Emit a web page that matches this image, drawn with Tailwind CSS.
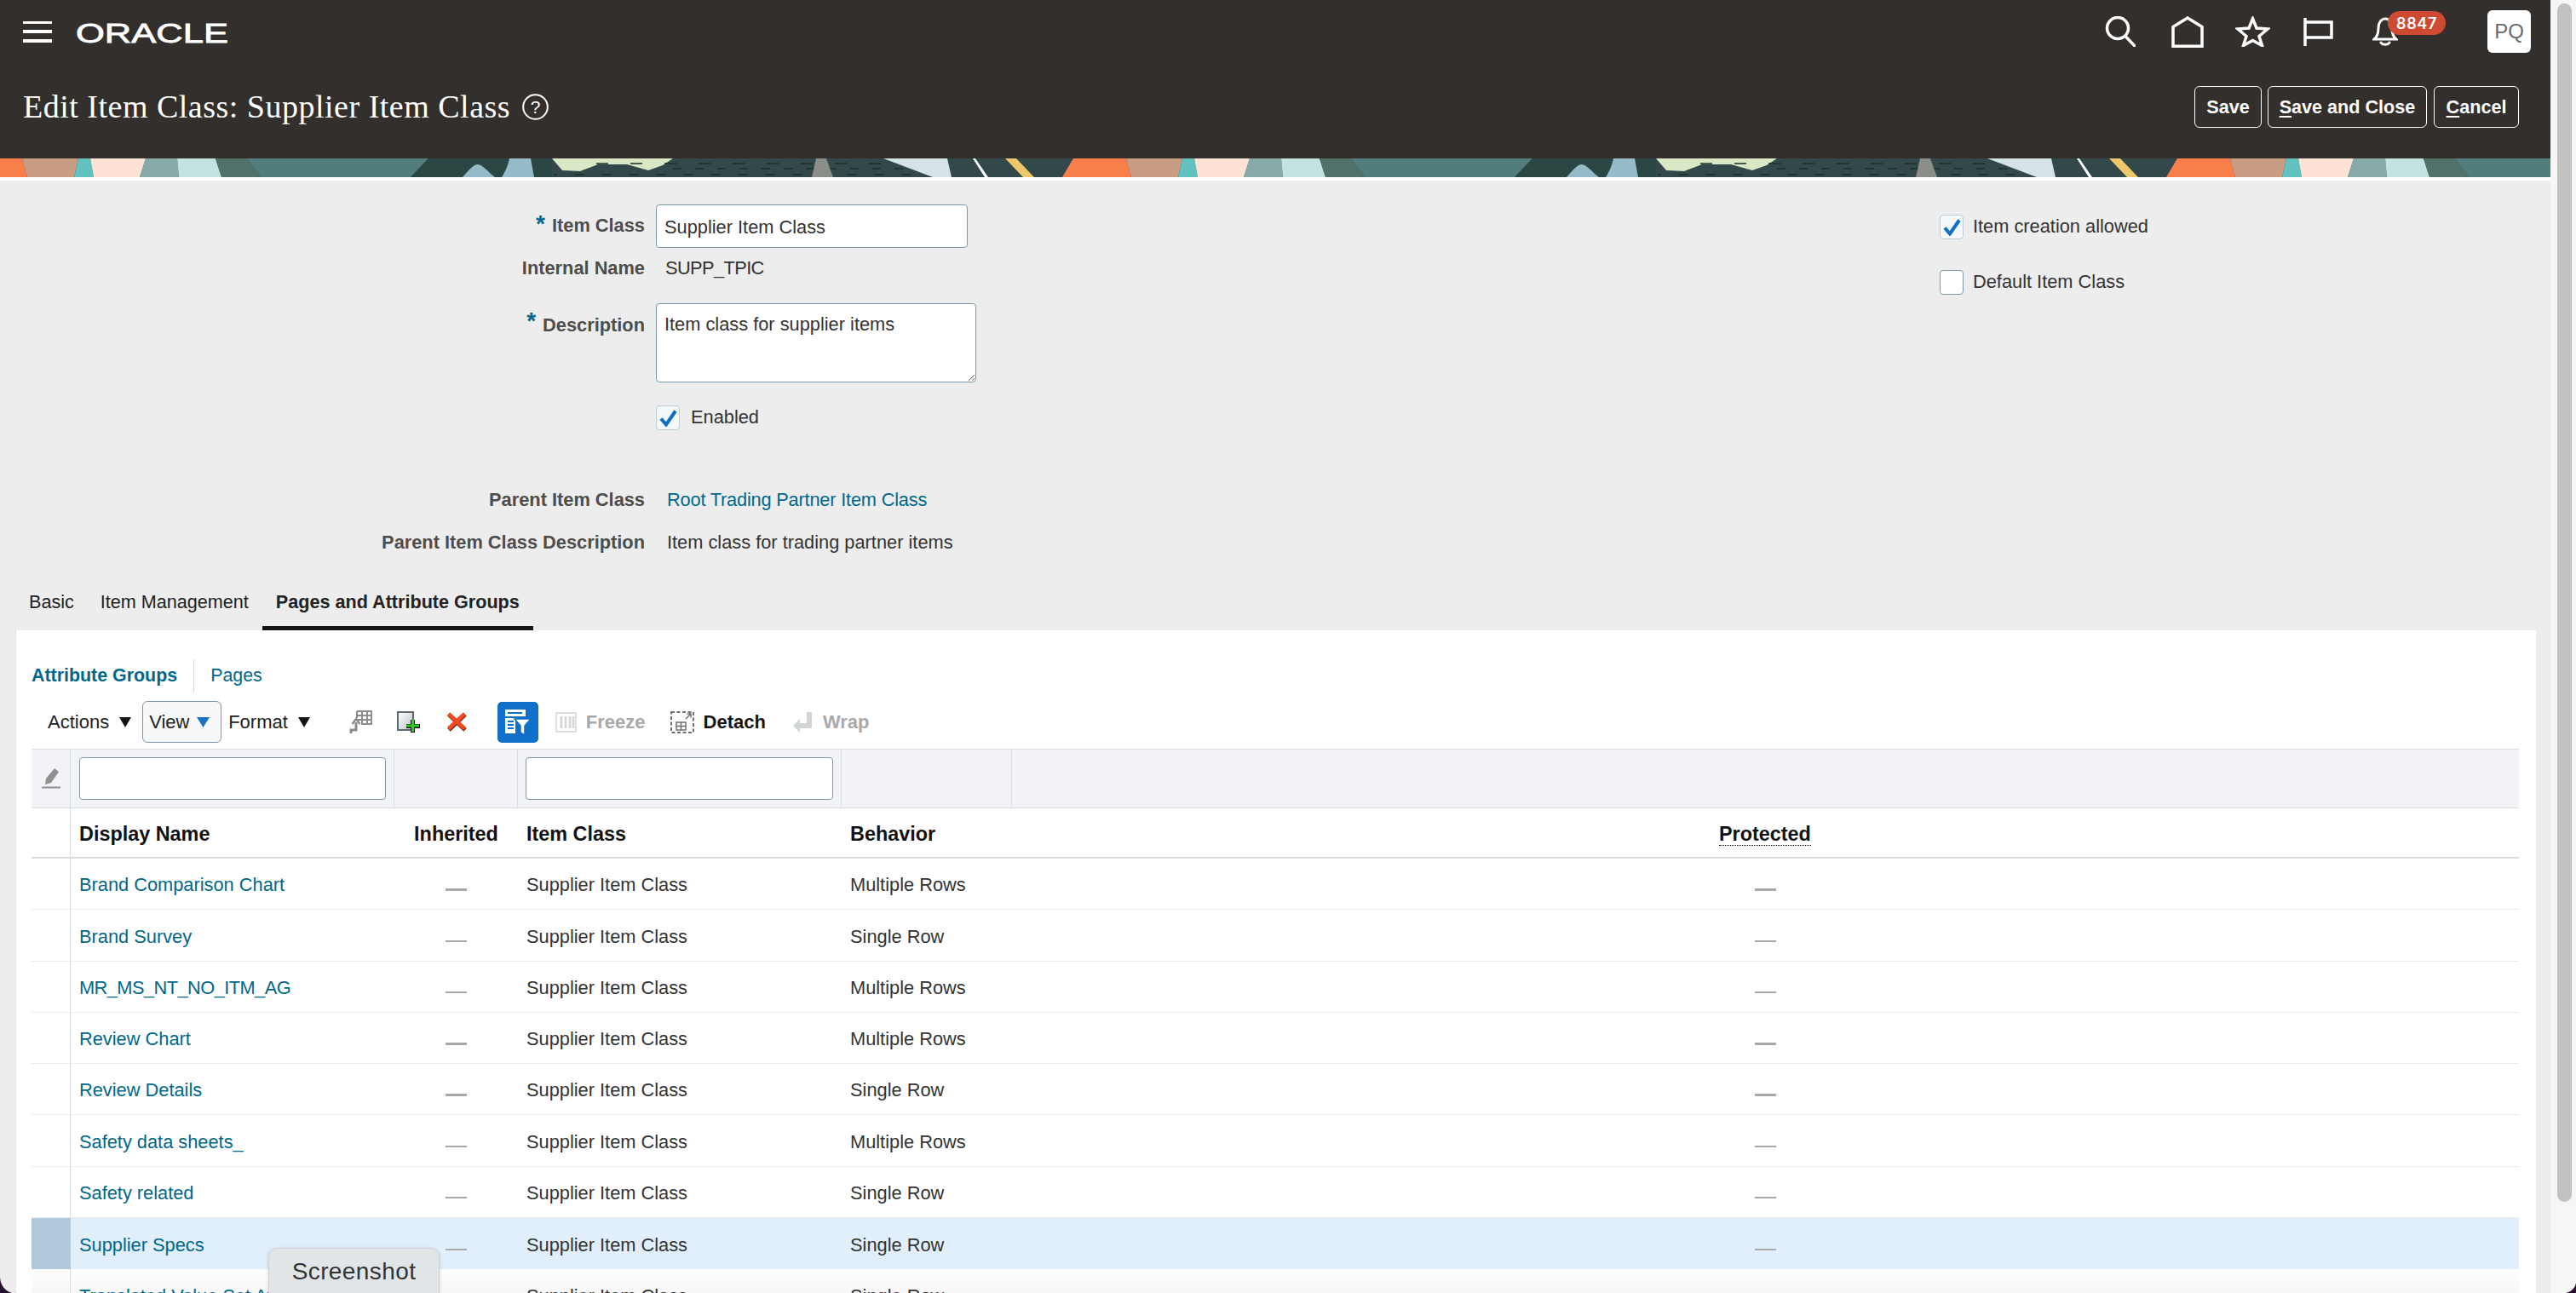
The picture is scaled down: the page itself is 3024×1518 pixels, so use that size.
<!DOCTYPE html>
<html>
<head>
<meta charset="utf-8">
<title>Edit Item Class</title>
<script src="https://cdn.jsdelivr.net/npm/@tailwindcss/browser@4"></script>
</head>
<body class="m-0 overflow-hidden">
<div class="relative flex w-[3024px] h-[1518px] overflow-hidden bg-[#ededed] font-['Liberation_Sans',Arial,sans-serif] text-[21.8px] text-[#333]">
  <main class="w-[2994px] shrink-0 flex flex-col">
    <header class="h-[186px] shrink-0 bg-[#332f2c] text-white">
      <div class="flex items-center h-[74px]">
        <div class="ml-[27px] w-[34px] h-[25px] flex flex-col justify-between">
          <div class="h-[3.5px] bg-white"></div><div class="h-[3.5px] bg-white"></div><div class="h-[3.5px] bg-white"></div>
        </div>
        <svg class="ml-[28px] mt-[4px]" width="179" height="36" viewBox="0 0 179 36"><text x="0" y="29" font-size="30.5" fill="#fff" stroke="#fff" stroke-width="0.8" textLength="179" lengthAdjust="spacingAndGlyphs" font-family="Liberation Sans">ORACLE</text></svg>
        <div class="flex-1"></div>
        <svg width="36" height="36" viewBox="0 0 36 36" fill="none" stroke="#fff" stroke-width="3.5"><circle cx="15" cy="14" r="12.5"/><path d="M24 23.5L35 35" stroke-linecap="round"/></svg>
        <svg class="ml-[42px]" width="38" height="37" viewBox="0 0 38 37" fill="none" stroke="#fff" stroke-width="3.5"><path d="M2 35.2V12.5L19 2l17 10.5v22.7z"/></svg>
        <svg class="ml-[37px]" width="41" height="36" viewBox="0 0 41 36" fill="none" stroke="#fff" stroke-width="3.5"><path d="M20.5 3L25 14l13 1-10 8.5 3.5 11-11-6-11 6 3.500-11L3 15l13-1z"/></svg>
        <svg class="ml-[39px]" width="35" height="33" viewBox="0 0 35 33" fill="none" stroke="#fff" stroke-width="3.500"><path d="M2 0v33M2 5h31v18H2"/></svg>
        <div class="relative ml-[46px] w-[30px] h-[34px]">
          <svg width="30" height="34" viewBox="0 0 30 34" fill="none" stroke="#fff" stroke-width="3"><path d="M2 26c4-3 5-7 5-13C7 6 11 2 15 2s8 4 8 11c0 6 1 10 5 13z"/><path d="M10 30c2 3 8 3 10 0" stroke-linecap="round"/></svg>
          <div class="absolute left-[18px] top-[-7px] w-[68px] h-[28px] rounded-full bg-[#ce4a33] flex items-center justify-center font-['Inter',sans-serif] font-semibold text-[18px] tracking-[0.6px] text-white">8847</div>
        </div>
        <div class="ml-[105px] mr-[23px] w-[51px] h-[50px] rounded-[6px] bg-white flex items-center justify-center text-[#6b6b6b] text-[24px]">PQ</div>
      </div>
      <div class="flex items-center h-[102px] pl-[27px] pr-[37px]">
        <h1 class="text-[38px] leading-[44px] tracking-[0.5px] font-normal text-white font-['Liberation_Serif',serif]">Edit Item Class: Supplier Item Class</h1>
        <svg class="ml-[14px]" width="31" height="31" viewBox="0 0 31 31" fill="none" stroke="#fff" stroke-width="2"><circle cx="15.500" cy="15.500" r="14.300"/><text x="15.500" y="23" text-anchor="middle" font-size="21" fill="#fff" stroke="none" font-family="Liberation Sans">?</text></svg>
        <div class="flex-1"></div>
        <button class="w-[79px] h-[49px] pt-[2px] rounded-[6px] border-[1.5px] border-white font-bold text-[21.6px] text-white">Save</button>
        <button class="ml-[7px] w-[187px] h-[49px] pt-[2px] rounded-[6px] border-[1.5px] border-white font-bold text-[21.6px] text-white"><span class="underline underline-offset-[3px]">S</span>ave and Close</button>
        <button class="ml-[8px] w-[100px] h-[49px] pt-[2px] rounded-[6px] border-[1.5px] border-white font-bold text-[21.6px] text-white"><span class="underline underline-offset-[3px]">C</span>ancel</button>
      </div>
    </header>

    <svg class="shrink-0 block" width="2994" height="22" viewBox="0 0 2994 22">
      <defs>
        <g id="tile">
          <rect width="1296" height="22" fill="#33484a"/>
          <path d="M0 0H26L32 22H0z" fill="#f97f4a"/>
          <path d="M26 0H92L87 22H32z" fill="#c99d84"/>
          <path d="M92 0H106L110 22H87z" fill="#61c2bf"/>
          <path d="M106 0H171L164 22H110z" fill="#fee2d6"/>
          <path d="M171 0H208L210 22H164z" fill="#86aaa8"/>
          <path d="M208 0H253L260 22H210z" fill="#c5e2e3"/>
          <path d="M253 0H290L307 22H260z" fill="#4f7169"/>
          <path d="M290 0H503L482 22H307z" fill="#527d7d"/>
          <path d="M503 0H648V22H482z" fill="#2b4743"/>
          <path d="M543 22C552 12 556 7 561 7C566 7 573 16 581 22z" fill="#96bbc8"/>
          <path d="M589 22C594 14 597 6 598 0H623L627 22z" fill="#96bbc8"/>
          <path d="M648 0L660 14L681 15L702 7L736 7L761 14L778 8L790 0z" fill="#dbe8c6"/>
          <g stroke="#1f2e2e" stroke-width="1.500" fill="none">
            <path d="M700 6H1040" stroke-dasharray="14 26"/>
            <path d="M650 19H1090" stroke-dasharray="12 20" stroke-dashoffset="8"/>
            <path d="M790 12H1090" stroke-dasharray="10 16"/>
          </g>
          <path d="M953 22L958 0H970L978 22z" fill="#8a8f8a"/>
          <path d="M1037 0H1112L1117 22H1095z" fill="#d5e2e6"/>
          <path d="M1123 0H1260L1247 22H1128z" fill="#33484a"/>
          <path d="M1142 0H1145L1160 22H1156z" fill="#fff"/>
          <path d="M1180 0H1193L1214 22H1201z" fill="#eec76c"/>
          <path d="M1260 0H1296V22H1247z" fill="#f97f4a"/>
        </g>
      </defs>
      <use href="#tile" x="0"/><use href="#tile" x="1296"/><use href="#tile" x="2592"/>
    </svg>
    <div class="h-[4px] shrink-0 bg-white"></div>

    <section class="flex shrink-0">
      <div class="w-[2277px] pt-[28px] grid grid-cols-[757px_1fr] gap-x-[13px]">
        <label class="h-[51px] flex items-center justify-end font-bold text-[#4d4d4d]"><span class="text-[#00688c] text-[28px] leading-[20px] mr-[8px] -translate-y-[3px]">*</span>Item Class</label>
        <input class="w-[366px] h-[51px] pt-[2px] rounded-[4px] border-[1.5px] border-[#7a99a6] bg-white px-[9px] text-[21.8px] text-[#333]" value="Supplier Item Class">

        <label class="h-[50px] pb-[2px] flex items-center justify-end font-bold text-[#4d4d4d]">Internal Name</label>
        <div class="h-[50px] pb-[2px] flex items-center pl-[11px] tracking-[-0.6px]">SUPP_TPIC</div>

        <label class="mt-[15px] pt-[12px] h-[93px] flex justify-end font-bold text-[#4d4d4d] leading-[28px]"><span class="text-[#00688c] text-[28px] leading-[20px] mr-[8px] -mt-[1px]">*</span>Description</label>
        <textarea class="mt-[15px] w-[376px] h-[93px] rounded-[4px] border-[1.5px] border-[#7a99a6] bg-white px-[9px] pt-[10px] text-[21.8px] leading-[28px] text-[#333]">Item class for supplier items</textarea>

        <div class="mt-[27px] h-[29px]"></div>
        <div class="mt-[27px] h-[29px] flex items-center">
          <div class="w-[28px] h-[29px] rounded-[4px] border border-[#b9ccd8] bg-[#f5f8fb] flex items-center justify-center"><svg width="21" height="20" viewBox="0 0 21 20" fill="none" stroke="#0f6fc6" stroke-width="4"><path d="M2 10.500l6 7L19 1.500"/></svg></div>
          <span class="ml-[13px]">Enabled</span>
        </div>

        <label class="mt-[57px] h-[50px] flex items-center justify-end font-bold text-[#4d4d4d]">Parent Item Class</label>
        <a class="mt-[57px] h-[50px] flex items-center pl-[13px] tracking-[-0.2px] text-[#00688c]">Root Trading Partner Item Class</a>

        <label class="h-[50px] flex items-center justify-end font-bold text-[#4d4d4d]">Parent Item Class Description</label>
        <div class="h-[50px] flex items-center pl-[13px]">Item class for trading partner items</div>
      </div>
      <div class="pt-[40px] flex flex-col gap-[36px]">
        <div class="h-[29px] flex items-center">
          <div class="w-[28px] h-[29px] rounded-[4px] border border-[#b9ccd8] bg-[#f5f8fb] flex items-center justify-center"><svg width="21" height="20" viewBox="0 0 21 20" fill="none" stroke="#0f6fc6" stroke-width="4"><path d="M2 10.500l6 7L19 1.500"/></svg></div>
          <span class="ml-[11px]">Item creation allowed</span>
        </div>
        <div class="h-[29px] flex items-center">
          <div class="w-[28px] h-[29px] rounded-[4px] border border-[#7f98a8] bg-white"></div>
          <span class="ml-[11px]">Default Item Class</span>
        </div>
      </div>
    </section>

    <nav class="mt-[18px] ml-[18px] h-[60px] shrink-0 flex text-[21.6px] text-[#222]">
      <div class="h-full flex items-center pl-[16px] pr-[15px] border-b-[5px] border-transparent">Basic</div>
      <div class="h-full flex items-center px-[16px] border-b-[5px] border-transparent">Item Management</div>
      <div class="h-full flex items-center px-[16px] font-bold border-b-[5px] border-[#161513]">Pages and Attribute Groups</div>
    </nav>

    <section class="ml-[18px] w-[2959px] flex-1 min-h-0 overflow-hidden bg-white pl-[18px] pr-[20px] pt-[34px] border-l border-dotted border-[#cfd5d8]">
      <div class="h-[39px] flex items-center text-[21.4px] text-[#00688c]">
        <div class="h-full flex items-center pr-[19px] font-bold border-r border-[#d8dde0]">Attribute Groups</div>
        <div class="pl-[19px]">Pages</div>
      </div>

      <div class="mt-[10px] h-[49px] flex items-center text-[22px] text-[#222]">
        <span class="ml-[19px]">Actions</span>
        <svg class="ml-[12px]" width="14" height="12" viewBox="0 0 14 12"><path d="M0 0h14L7 12z" fill="#161513"/></svg>
        <div class="ml-[13px] w-[93px] h-[49px] rounded-[6px] border-[1.5px] border-[#7a99a6] bg-[#f7f8fa] flex items-center pl-[7px]">
          <span>View</span>
          <svg class="ml-[9px]" width="15" height="12" viewBox="0 0 15 12"><path d="M0 0h15L7.500 12z" fill="#1a73c8"/></svg>
        </div>
        <span class="ml-[8px]">Format</span>
        <svg class="ml-[12px]" width="14" height="12" viewBox="0 0 14 12"><path d="M0 0h14L7 12z" fill="#161513"/></svg>
        <svg class="ml-[46px]" width="27" height="28" viewBox="0 0 27 28" fill="none" stroke="#8c8c8c"><path d="M9 1h17v15H14M9 1v8M9 6h17M9 11h17M15 1v15M21 1v15" stroke-width="2"/><path d="M2 27v-4h6v-9" stroke-width="3"/><path d="M3.500 16L8 10l4.500 6" stroke-width="2.500"/></svg>
        <svg class="ml-[29px]" width="28" height="26" viewBox="0 0 28 26"><defs><linearGradient id="docg" x1="0" y1="0" x2="1" y2="1"><stop offset="0" stop-color="#fff"/><stop offset="1" stop-color="#bcc4c8"/></linearGradient></defs><rect x="1" y="1" width="18" height="21" fill="url(#docg)" stroke="#5e6a70" stroke-width="2"/><path d="M16 10h5v5h6v5h-6v5h-5v-5h-5v-5h5z" fill="#111"/><path d="M17 9.500h3v6h6v3h-6v5.500h-3v-5.500h-6v-3h6z" fill="#25d01f"/></svg>
        <svg class="ml-[30px]" width="24" height="23" viewBox="0 0 24 23" fill="none"><path d="M3 3l19 18M22 3L3 21" stroke="#7b2a14" stroke-width="5"/><path d="M2.500 2L21.500 19.500M21.500 2L2.500 19.500" stroke="#ef4a20" stroke-width="4.500"/></svg>
        <div class="ml-[36px] w-[48px] h-[48px] rounded-[5px] bg-[#0f6fc9] flex items-center justify-center">
          <svg width="34" height="34" viewBox="0 0 34 34" fill="none"><path d="M2 2h24v8H2zM2 12h12v18H2z" fill="#fff"/><path d="M5 6h17M5 16h7M5 20h7M5 24h7" stroke="#0f6fc9" stroke-width="1.800"/><path d="M13 13h19l-7 8v11l-5-3v-8z" fill="#fff" stroke="#0f6fc9" stroke-width="1.500"/></svg>
        </div>
        <svg class="ml-[20px]" width="25" height="24" viewBox="0 0 25 24" fill="#fff" stroke="#dcdcdc" stroke-width="2"><rect x="1" y="1" width="23" height="22" rx="1"/><path d="M7 5v14M12 5v14M17 5v14M21 5v14" stroke-width="2.500" stroke="#d4d4d4"/></svg>
        <span class="ml-[11px] font-bold text-[#a9a9a9]">Freeze</span>
        <svg class="ml-[29px]" width="28" height="26" viewBox="0 0 28 26" fill="none" stroke="#707070" stroke-width="2"><rect x="1" y="1" width="26" height="24" stroke-dasharray="4 2.500"/><path d="M7 13h11v9H7zM7 17.500h11M12.500 13v9" stroke-width="1.500"/><path d="M18 9l6-6M19.500 3H24v4.500" stroke-width="1.500"/></svg>
        <span class="ml-[11px] font-bold text-[#161513]">Detach</span>
        <svg class="ml-[32px]" width="23" height="24" viewBox="0 0 23 24" fill="#d2d5d5"><path d="M16 0h6v19H8v5L0 16l8-8v5h8z"/></svg>
        <span class="ml-[12px] font-bold text-[#a9a9a9]">Wrap</span>
      </div>

      <div class="mt-[7px] h-[70px] flex bg-[#f1f3f7] border-y-[1.5px] border-[#d8dde0] box-border">
        <div class="w-[46px] flex items-center justify-center border-r border-[#d8dde0]">
          <svg width="22" height="24" viewBox="0 0 22 24" fill="#8f8f8f"><path d="M15 0l5 4-9 13-7 2 1-7z"/><rect x="0" y="21.500" width="22" height="2"/></svg>
        </div>
        <div class="w-[380px] flex items-center justify-center border-r border-[#d8dde0]"><input class="w-[360px] h-[50px] rounded-[4px] border-[1.5px] border-[#7a99a6] bg-white" aria-label="Display Name"></div>
        <div class="w-[145px] border-r border-[#d8dde0]"></div>
        <div class="w-[380px] flex items-center justify-center border-r border-[#d8dde0]"><input class="w-[361px] h-[50px] rounded-[4px] border-[1.5px] border-[#7a99a6] bg-white" aria-label="Item Class"></div>
        <div class="w-[200px] border-r border-[#d8dde0]"></div>
      </div>

      <div class="grid grid-cols-[46px_380px_145px_380px_1020px_1fr] h-[59px] pt-[5px] items-center border-b-[2px] border-[#d8dde0] font-bold text-[23.4px] text-[#111]">
        <div class="self-stretch -mt-[5px] border-r border-[#d8dde0]"></div>
        <div class="pl-[10px]">Display Name</div>
        <div class="text-center">Inherited</div>
        <div class="pl-[10px]">Item Class</div>
        <div class="pl-[10px]">Behavior</div>
        <div class="pl-[10px]"><span class="inline-block leading-[26px] border-b border-dotted border-black">Protected</span></div>
      </div>

      <div class="text-[21.8px]">
        <div class="grid grid-cols-[46px_380px_145px_380px_1020px_1fr] h-[60.25px] pt-[4px] items-center border-b border-[#e9ebed]">
          <div class="self-stretch -mt-[4px] border-r border-[#d8dde0]"></div><a class="pl-[10px] text-[#00688c]">Brand Comparison Chart</a><div class="h-[2.500px] w-[25px] mt-[10px] justify-self-center bg-[#a8a8a8]"></div><div class="pl-[10px]">Supplier Item Class</div><div class="pl-[10px]">Multiple Rows</div><div class="h-[2.500px] w-[25px] mt-[10px] ml-[52px] bg-[#a8a8a8]"></div>
        </div>
        <div class="grid grid-cols-[46px_380px_145px_380px_1020px_1fr] h-[60.25px] pt-[4px] items-center border-b border-[#e9ebed]">
          <div class="self-stretch -mt-[4px] border-r border-[#d8dde0]"></div><a class="pl-[10px] text-[#00688c]">Brand Survey</a><div class="h-[2.500px] w-[25px] mt-[10px] justify-self-center bg-[#a8a8a8]"></div><div class="pl-[10px]">Supplier Item Class</div><div class="pl-[10px]">Single Row</div><div class="h-[2.500px] w-[25px] mt-[10px] ml-[52px] bg-[#a8a8a8]"></div>
        </div>
        <div class="grid grid-cols-[46px_380px_145px_380px_1020px_1fr] h-[60.25px] pt-[4px] items-center border-b border-[#e9ebed]">
          <div class="self-stretch -mt-[4px] border-r border-[#d8dde0]"></div><a class="pl-[10px] tracking-[-0.55px] text-[#00688c]">MR_MS_NT_NO_ITM_AG</a><div class="h-[2.500px] w-[25px] mt-[10px] justify-self-center bg-[#a8a8a8]"></div><div class="pl-[10px]">Supplier Item Class</div><div class="pl-[10px]">Multiple Rows</div><div class="h-[2.500px] w-[25px] mt-[10px] ml-[52px] bg-[#a8a8a8]"></div>
        </div>
        <div class="grid grid-cols-[46px_380px_145px_380px_1020px_1fr] h-[60.25px] pt-[4px] items-center border-b border-[#e9ebed]">
          <div class="self-stretch -mt-[4px] border-r border-[#d8dde0]"></div><a class="pl-[10px] text-[#00688c]">Review Chart</a><div class="h-[2.500px] w-[25px] mt-[10px] justify-self-center bg-[#a8a8a8]"></div><div class="pl-[10px]">Supplier Item Class</div><div class="pl-[10px]">Multiple Rows</div><div class="h-[2.500px] w-[25px] mt-[10px] ml-[52px] bg-[#a8a8a8]"></div>
        </div>
        <div class="grid grid-cols-[46px_380px_145px_380px_1020px_1fr] h-[60.25px] pt-[4px] items-center border-b border-[#e9ebed]">
          <div class="self-stretch -mt-[4px] border-r border-[#d8dde0]"></div><a class="pl-[10px] text-[#00688c]">Review Details</a><div class="h-[2.500px] w-[25px] mt-[10px] justify-self-center bg-[#a8a8a8]"></div><div class="pl-[10px]">Supplier Item Class</div><div class="pl-[10px]">Single Row</div><div class="h-[2.500px] w-[25px] mt-[10px] ml-[52px] bg-[#a8a8a8]"></div>
        </div>
        <div class="grid grid-cols-[46px_380px_145px_380px_1020px_1fr] h-[60.25px] pt-[4px] items-center border-b border-[#e9ebed]">
          <div class="self-stretch -mt-[4px] border-r border-[#d8dde0]"></div><a class="pl-[10px] text-[#00688c]">Safety data sheets_</a><div class="h-[2.500px] w-[25px] mt-[10px] justify-self-center bg-[#a8a8a8]"></div><div class="pl-[10px]">Supplier Item Class</div><div class="pl-[10px]">Multiple Rows</div><div class="h-[2.500px] w-[25px] mt-[10px] ml-[52px] bg-[#a8a8a8]"></div>
        </div>
        <div class="grid grid-cols-[46px_380px_145px_380px_1020px_1fr] h-[60.25px] pt-[4px] items-center border-b border-[#e9ebed]">
          <div class="self-stretch -mt-[4px] border-r border-[#d8dde0]"></div><a class="pl-[10px] text-[#00688c]">Safety related</a><div class="h-[2.500px] w-[25px] mt-[10px] justify-self-center bg-[#a8a8a8]"></div><div class="pl-[10px]">Supplier Item Class</div><div class="pl-[10px]">Single Row</div><div class="h-[2.500px] w-[25px] mt-[10px] ml-[52px] bg-[#a8a8a8]"></div>
        </div>
        <div class="grid grid-cols-[46px_380px_145px_380px_1020px_1fr] h-[60.25px] pt-[4px] items-center bg-[#e1eefb]">
          <div class="self-stretch -mt-[4px] bg-[#b0c8da]"></div><a class="pl-[10px] text-[#00688c]">Supplier Specs</a><div class="h-[2.500px] w-[25px] mt-[10px] justify-self-center bg-[#a8a8a8]"></div><div class="pl-[10px]">Supplier Item Class</div><div class="pl-[10px]">Single Row</div><div class="h-[2.500px] w-[25px] mt-[10px] ml-[52px] bg-[#a8a8a8]"></div>
        </div>
        <div class="grid grid-cols-[46px_380px_145px_380px_1020px_1fr] h-[60.25px] pt-[4px] items-center bg-linear-to-b from-white to-[#eeeeee]">
          <div class="self-stretch -mt-[4px] border-r border-[#d8dde0]"></div><a class="pl-[10px] text-[#00688c]">Translated Value Set Attributes</a><div class="h-[2.500px] w-[25px] mt-[10px] justify-self-center bg-[#a8a8a8]"></div><div class="pl-[10px]">Supplier Item Class</div><div class="pl-[10px]">Single Row</div><div class="h-[2.500px] w-[25px] mt-[10px] ml-[52px] bg-[#a8a8a8]"></div>
        </div>
      </div>
    </section>
  </main>

  <aside class="flex-1 bg-[#f6f6f6] pl-[8px] pt-[4px]">
    <div class="w-[17px] h-[1407px] rounded-[9px] bg-[#c1c1c1]"></div>
  </aside>

  <div class="absolute left-[315px] top-[1465px] w-[201px] h-[70px] rounded-[10px] bg-[#e2e5e8] border border-[#cfd3d6] shadow-[0_1px_4px_rgba(0,0,0,0.15)] pt-[10px] text-center text-[28px] leading-[34px] tracking-[0.4px] text-[#333]">Screenshot</div>
  <svg class="absolute left-0 bottom-0" width="14" height="18" viewBox="0 0 14 18"><path d="M0 0C1 9 5 15 14 18H0z" fill="#2a1030"/></svg>
  <svg class="absolute right-0 bottom-0" width="14" height="12" viewBox="0 0 14 12"><path d="M14 0C13 6 9 10 2 12H14z" fill="#2a1030"/></svg>
</div>
</body>
</html>
